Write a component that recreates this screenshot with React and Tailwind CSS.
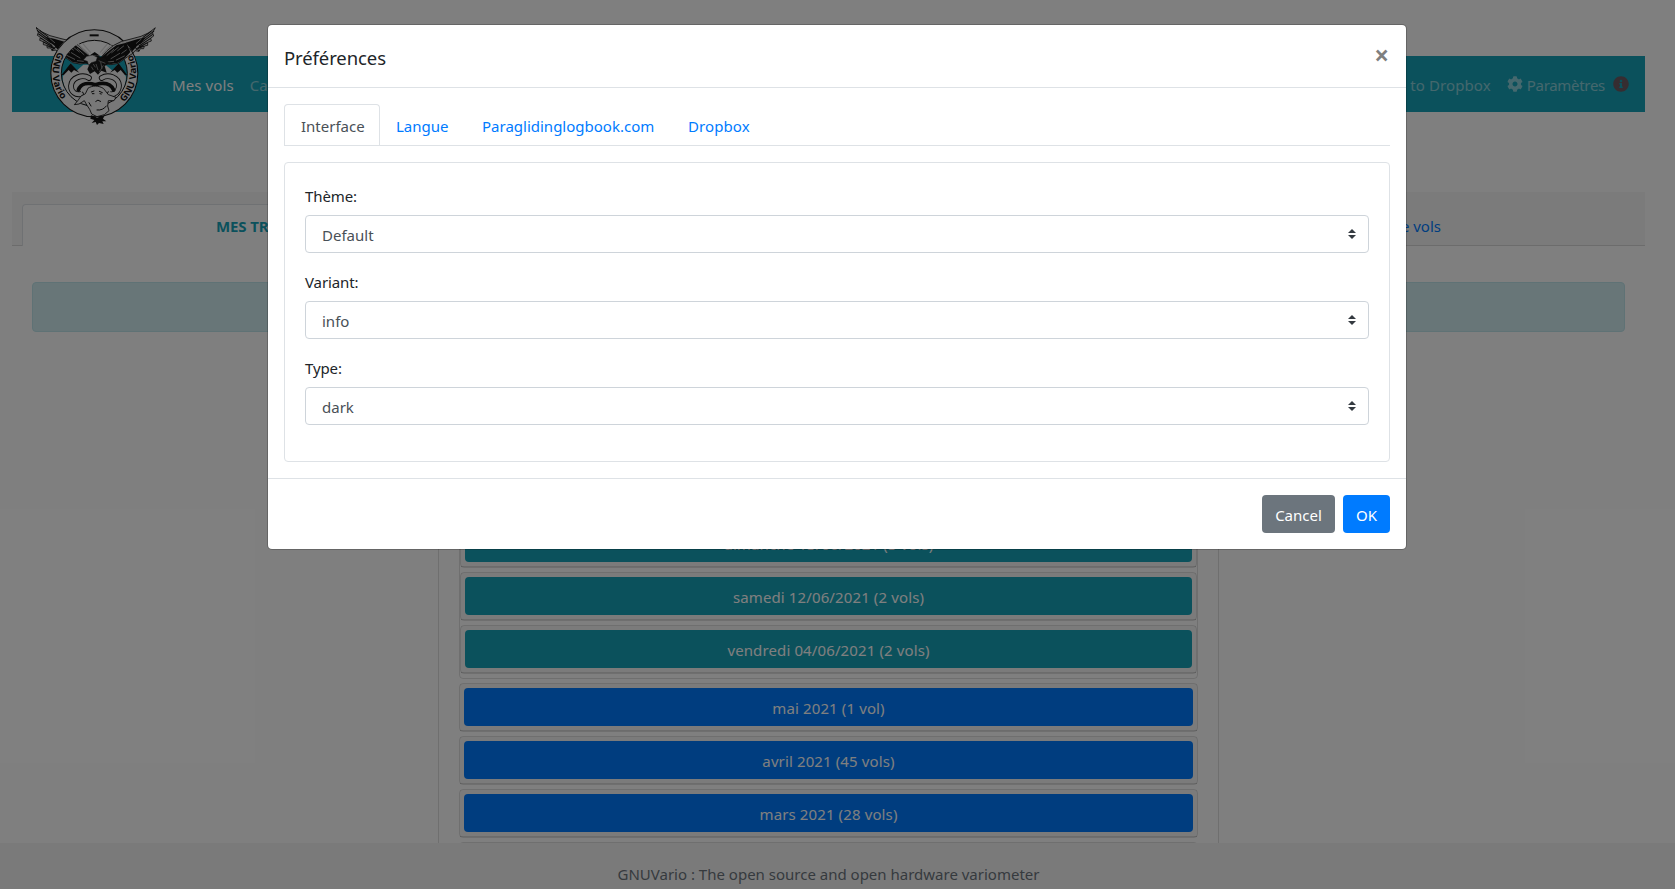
import { FaCog, FaInfoCircle } from "react-icons/fa";

function Wing() {
  return (
    <g strokeLinejoin="round" strokeLinecap="round">
      <path
        d="M18 22 L36 36 L60 47 L90 55 L118 62 L142 74 L162 90 L178 108 L178 128 L150 132 L128 128 L114 118 L100 108 L84 98 L78 90 L66 92 L62 84 L52 84 L50 76 L40 74 L40 65 L29 61 L31 52 L22 46 L25 37 Z"
        fill="#ddd"
        stroke="#1a1a1a"
        strokeWidth="2.5"
      />
      <path d="M46 50 L72 56 L106 66 L96 78 L86 92 L72 76 L58 66 Z" fill="#141414" />
      <path d="M104 66 L134 74 L156 90 L180 110 L174 128 L150 130 L128 126 L108 112 L92 94 Z" fill="#141414" />
      <path
        d="M22 32 L58 60 M26 42 L62 68 M32 54 L66 76 M41 66 L70 82 M52 77 L74 86 M30 32 L54 50 M66 90 L78 80 M84 97 L94 84"
        stroke="#1a1a1a"
        strokeWidth="3.2"
        fill="none"
      />
      <path
        d="M112 76 L130 90 M128 80 L148 96 M142 86 L162 104 M104 88 L118 98 M124 98 L150 114 M110 106 L134 118 M142 122 L160 124 M60 56 L74 68"
        stroke="#c4c4c4"
        strokeWidth="2.2"
        fill="none"
      />
    </g>
  );
}

function Logo() {
  return (
    <svg viewBox="18 21 360 294" className="-mt-4 h-[98px] w-[120px] shrink-0">
      <defs>
        <path id="ring-left" d="M86 95 A124 124 0 0 0 106 249" />
        <path id="ring-right" d="M282 246 A124 124 0 0 0 301 94" />
        <clipPath id="outside-ring">
          <path d="M0 0 H193 V29 A131 131 0 0 0 80 226 L0 300 Z" />
        </clipPath>
        <clipPath id="inside-ring">
          <circle cx="193" cy="160" r="100" />
        </clipPath>
      </defs>

      {/* snowy mountains behind the gnu */}
      <path
        d="M98 170 L122 130 L140 152 L160 134 L226 134 L248 152 L266 130 L288 170 C288 204 268 240 232 254 H158 C122 240 98 206 98 170 Z"
        fill="#f0f0f0"
      />
      <path
        d="M94 166 L122 130 L148 158 L132 150 L124 158 L116 150 L102 164 Z M292 166 L266 130 L240 158 L254 150 L262 158 L272 150 L284 164 Z M180 106 L194 96 L210 107 Z"
        fill="#141414"
      />

      <circle cx="193" cy="160" r="115" fill="none" stroke="#f0f0f0" strokeWidth="32" />
      <circle cx="193" cy="160" r="130.5" fill="none" stroke="#141414" strokeWidth="3.2" />
      <circle cx="193" cy="160" r="99" fill="none" stroke="#141414" strokeWidth="3" />
      <path d="M179 46 H206" stroke="#141414" strokeWidth="6" />
      <text fontFamily="Open Sans, sans-serif" fontSize="28" fontWeight="700" fill="#141414">
        <textPath href="#ring-left" textLength="154" lengthAdjust="spacingAndGlyphs">GNU Vario</textPath>
      </text>
      <text fontFamily="Open Sans, sans-serif" fontSize="28" fontWeight="700" fill="#141414">
        <textPath href="#ring-right" textLength="154" lengthAdjust="spacingAndGlyphs">GNU Vario</textPath>
      </text>

      {/* the left wing passes behind the ring, the right one over it */}
      <g clipPath="url(#outside-ring)">
        <Wing />
      </g>
      <g clipPath="url(#inside-ring)">
        <Wing />
      </g>
      <g transform="translate(393 2) scale(-1 1)">
        <Wing />
      </g>
      <path d="M144 72 L176 102 M158 70 L182 98" stroke="#ddd" strokeWidth="4" />
      <path d="M246 72 L216 102 M232 72 L210 98" stroke="#ddd" strokeWidth="4" />

      {/* eagle body and head */}
      <path
        d="M176 112 L200 106 L226 116 L238 130 L224 138 L230 158 L214 152 L204 164 L194 154 L180 162 L172 148 L178 134 L164 128 Z"
        fill="#1b1b1b"
      />
      <path d="M160 120 L170 109 L188 105 L202 112 L198 124 L184 128 L176 136 L172 124 Z" fill="#e8e8e8" stroke="#222" strokeWidth="1.5" />
      <path
        d="M184 140 L190 150 M198 132 L204 150 M212 126 L216 146 M206 122 L226 130 M190 132 L196 142 M220 136 L208 156"
        stroke="#999"
        strokeWidth="2.4"
      />

      <g transform="translate(45 90)" strokeLinejoin="round" strokeLinecap="round">
        {/* curled horns: dark outline with a light tube */}
        <g fill="none">
          <path d="M132 84 C112 72 80 82 78 108 C78 126 92 136 108 132" stroke="#141414" strokeWidth="17" />
          <path d="M170 84 C190 72 220 82 222 106 C222 124 208 136 194 132" stroke="#141414" strokeWidth="17" />
          <path d="M132 84 C112 72 80 82 78 108 C78 126 92 136 108 132" stroke="#f0f0f0" strokeWidth="12" />
          <path d="M170 84 C190 72 220 82 222 106 C222 124 208 136 194 132" stroke="#f0f0f0" strokeWidth="12" />
          <path d="M100 120 C108 98 132 98 151 104 C172 98 196 98 206 120" stroke="#141414" strokeWidth="11" />
          <path d="M110 124 C118 108 136 108 151 113 C168 108 186 108 194 124" stroke="#f0f0f0" strokeWidth="5" />
        </g>
        {/* head and ears */}
        <path
          d="M130 114 C142 106 162 106 176 116 L190 134 L213 142 L207 152 L190 152 L188 168 L192 182 L178 194 L156 200 L140 192 L134 178 L126 166 L118 152 L102 162 L88 164 L100 150 L108 138 L120 132 Z"
          fill="#f0f0f0"
          stroke="#141414"
          strokeWidth="2.6"
        />
        <path
          d="M139 126 L147 123 M142 131 L147 131 M163 124 L172 128 M165 131 L169 132 M152 154 Q158 146 167 154 M156 180 Q174 182 184 168 M132 158 L138 168"
          fill="none"
          stroke="#141414"
          strokeWidth="3"
        />
        {/* beard */}
        <path
          d="M138 196 L148 199 L156 203 L168 199 L178 198 L174 206 L184 214 L172 214 L176 222 L162 219 L156 225 L152 216 L140 219 L148 210 L136 206 Z"
          fill="#141414"
        />
      </g>
    </svg>
  );
}

function Item({ children, color }) {
  return (
    <div className="mb-1 rounded-[4px] border border-black/[.125]">
      <div className="border-b border-black/[.125] bg-black/[.03] p-1">
        <div className={`flex h-[38px] items-center justify-center rounded-[4px] pt-px tracking-[0.12px] text-white ${color}`}>
          {children}
        </div>
      </div>
    </div>
  );
}

function Field({ label, value }) {
  return (
    <div className="mb-4">
      <div className="mb-[7px] h-[25px] pt-px leading-6 tracking-[-0.1px]">{label}</div>
      <div className="flex h-[38px] items-center justify-between rounded-[4px] border border-[#ced4da] pr-3 pl-4 text-[#495057]">
        <span className="pt-[2px]">{value}</span>
        <svg viewBox="0 0 4 5" className="h-[10px] w-2">
          <path d="M2 0L0 2h4zm0 5L0 3h4z" fill="#343a40" />
        </svg>
      </div>
    </div>
  );
}

export default function App() {
  return (
    <div className="relative flex h-[889px] w-[1675px] flex-col overflow-hidden bg-white font-['Noto_Sans',sans-serif] text-[15px] leading-6 text-[#212529]">
      <main className="min-h-0 flex-1 overflow-hidden pr-[30px] pl-3">
        <nav className="mt-14 flex h-14 items-center bg-[#17a2b8] pr-4 pl-6 text-white/50">
          <Logo />
          <span className="ml-4 pt-[2px] tracking-[0.1px] text-white">Mes vols</span>
          <span className="ml-4 pt-[2px]">Carnet</span>
          <span className="ml-auto pt-[2px] tracking-[0.1px]">Send to Dropbox</span>
          <FaCog className="ml-4 size-4" />
          <span className="ml-1 pt-[2px] tracking-[-0.3px]">Paramètres</span>
          <FaInfoCircle className="ml-2 size-4 text-[#6c5a63]" />
        </nav>

        <div className="mt-20 flex h-[54px] items-end border-b border-black/[.125] bg-black/[.03] pl-[10px]">
          <div className="-mb-px h-[42px] w-[540px] rounded-t-[4px] border border-b-0 border-[#dee2e6] bg-white pt-[9px] pl-[193px] font-bold tracking-[-0.1px] text-[#17a2b8]">
            MES TRACES
          </div>
          <div className="h-[41px] flex-1 pt-[10px] pr-[204px] text-right text-[#007bff]">Statistiques de vols</div>
        </div>

        <div className="px-5 pt-9">
          <div className="h-[50px] rounded-[4px] border border-[#bee5eb] bg-[#d1ecf1]" />
          <div className="mx-auto mt-4 w-[781px] border border-black/[.125] px-5 pt-[116px]">
            <div className="mb-1 rounded-[4px] border border-black/[.125]">
              <Item color="bg-[#17a2b8]">dimanche 20/06/2021 (1 vol)</Item>
              <Item color="bg-[#17a2b8]">dimanche 13/06/2021 (3 vols)</Item>
              <Item color="bg-[#17a2b8]">samedi 12/06/2021 (2 vols)</Item>
              <Item color="bg-[#17a2b8]">vendredi 04/06/2021 (2 vols)</Item>
            </div>
            <Item color="bg-[#007bff]">mai 2021 (1 vol)</Item>
            <Item color="bg-[#007bff]">avril 2021 (45 vols)</Item>
            <Item color="bg-[#007bff]">mars 2021 (28 vols)</Item>
            <Item color="bg-[#007bff]" />
          </div>
        </div>
      </main>

      <footer className="h-[46px] shrink-0 bg-[#f5f5f5] pt-[19px] pr-[30px] pl-3 text-center text-[#6c757d]">
        GNUVario : The open source and open hardware variometer
      </footer>

      <div className="absolute inset-0 bg-black/50 pt-6 pl-[267px]">
        <div className="w-[1140px] rounded-[5px] border border-black/20 bg-white bg-clip-padding">
          <div className="flex h-[63px] justify-between border-b border-[#dee2e6] px-4 pt-4">
            <h5 className="text-[18.5px] leading-[34px] tracking-[-0.1px]">Préférences</h5>
            <span className="mt-[2px] mr-px font-['Open_Sans',sans-serif] text-[26px] leading-6 font-bold text-black/50">×</span>
          </div>
          <div className="p-4">
            <div className="flex h-[42px] border-b border-[#dee2e6] text-[#007bff]">
              <span className="w-24 rounded-t-[4px] border border-b-0 border-[#dee2e6] bg-white px-4 pt-[9px] text-[#495057]">Interface</span>
              <span className="w-[85px] pt-[10px] pl-4">Langue</span>
              <span className="w-[206px] pt-[10px] pl-[17px]">Paraglidinglogbook.com</span>
              <span className="pt-[10px] pl-[17px] tracking-[0.1px]">Dropbox</span>
            </div>
            <div className="mt-4 h-[300px] rounded-[4px] border border-[#dee2e6] p-5">
              <Field label="Thème:" value="Default" />
              <Field label="Variant:" value="info" />
              <Field label="Type:" value="dark" />
            </div>
          </div>
          <div className="flex h-[71px] items-center justify-end gap-2 border-t border-[#dee2e6] pr-4 text-white">
            <div className="flex h-[38px] w-[73px] items-center justify-center rounded-[4px] bg-[#6c757d] pt-[2px]">Cancel</div>
            <div className="flex h-[38px] w-[47px] items-center justify-center rounded-[4px] bg-[#007bff] pt-[2px]">OK</div>
          </div>
        </div>
      </div>
    </div>
  );
}
